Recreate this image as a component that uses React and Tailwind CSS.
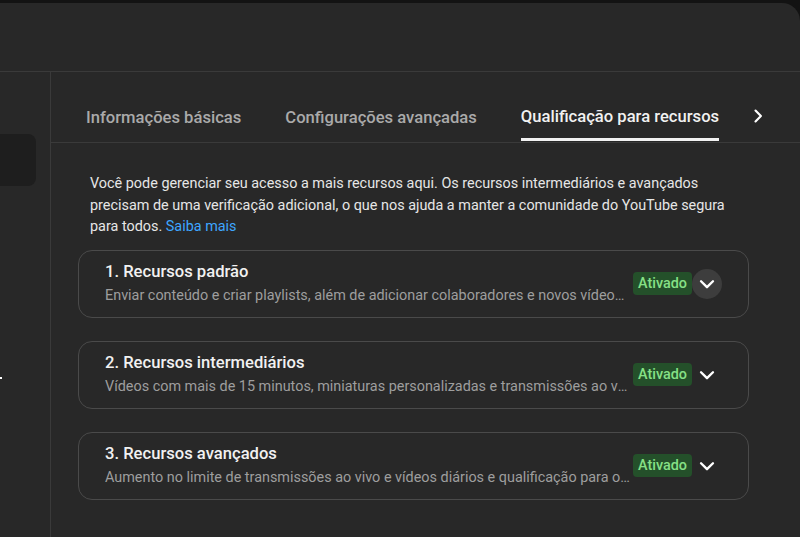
import React from 'react'

const recursos = [
  {
    titulo: '1. Recursos padrão',
    desc: 'Enviar conteúdo e criar playlists, além de adicionar colaboradores e novos vídeos a playlists',
    hover: true,
  },
  {
    titulo: '2. Recursos intermediários',
    desc: 'Vídeos com mais de 15 minutos, miniaturas personalizadas e transmissões ao vivo',
  },
  {
    titulo: '3. Recursos avançados',
    desc: 'Aumento no limite de transmissões ao vivo e vídeos diários e qualificação para o Programa de Parcerias',
  },
]

function Chevron({ className }) {
  return (
    <svg viewBox="0 0 24 24" className={className} fill="none" stroke="currentColor" strokeWidth="2.6" strokeLinecap="round" strokeLinejoin="round">
      <path d="M5.5 9l6.5 6.5L18.5 9" />
    </svg>
  )
}

export default function App() {
  return (
    <div className="w-[800px] h-[537px] overflow-hidden bg-[#131313] font-['Roboto','Noto_Sans',sans-serif]">
      <div className="mt-[3px] h-full rounded-tr-[18px] bg-[#282828] flex flex-col">
        {/* Header vide */}
        <div className="h-[69px] shrink-0 border-b border-[#3a3a3a]" />

        <div className="flex flex-1 min-h-0">
          {/* Barre latérale */}
          <div className="w-[51px] shrink-0 border-r border-[#3a3a3a] flex flex-col">
            <div className="mt-[62px] h-[52px] w-[36px] rounded-r-[8px] bg-[#1e1e1e]" />
            <div className="mt-[191px] h-[2px] w-[2px] bg-white" />
          </div>

          {/* Contenu */}
          <div className="flex-1 min-w-0 flex flex-col">
            <div className="h-[71px] shrink-0 border-b border-[#3a3a3a] flex items-end pl-[35px] pr-[32px]">
              <div className="flex items-end gap-[44px] text-[16.6px] font-medium leading-[20px] whitespace-nowrap">
                <div className="pb-[14px] text-[#aaaaaa]">Informações básicas</div>
                <div className="pb-[14px] text-[#aaaaaa]">Configurações avançadas</div>
                <div className="flex flex-col text-[#f1f1f1]">
                  <span className="pb-[11px]">Qualificação para recursos</span>
                  <span className="h-[3px] bg-[#f1f1f1] mb-[1px]" />
                </div>
              </div>
              <div className="ml-auto pb-[16px] text-white">
                <svg viewBox="0 0 24 24" className="w-[20px] h-[20px]" fill="none" stroke="currentColor" strokeWidth="2.6" strokeLinecap="round" strokeLinejoin="round">
                  <path d="M9 5.5l6.5 6.5L9 18.5" />
                </svg>
              </div>
            </div>

            <div className="pl-[27px] pr-[51px] pt-[30px]">
              <p className="pl-[12px] pr-[8px] text-[14.4px] leading-[21.5px] text-[#e6e6e6]">
                Você pode gerenciar seu acesso a mais recursos aqui. Os recursos intermediários e avançados precisam de uma verificação adicional, o que nos ajuda a manter a comunidade do YouTube segura para todos.{' '}
                <span className="text-[#3ea6ff]">Saiba mais</span>
              </p>

              <div className="mt-[12px] flex flex-col gap-[23px]">
                {recursos.map((r) => (
                  <div key={r.titulo} className="h-[68px] rounded-[14px] border border-[#4a4a4a] flex items-center pl-[26px] pr-[26px]">
                    <div className="flex-1 min-w-0">
                      <p className="text-[16.6px] font-medium leading-[22px] text-[#f1f1f1]">{r.titulo}</p>
                      <p className="mt-[3px] text-[14.4px] leading-[20px] text-[#9e9e9e] truncate">{r.desc}</p>
                    </div>
                    <span className="ml-[3px] shrink-0 h-[23px] px-[5px] rounded-[4px] bg-[#24502a] text-[#86e086] text-[14.4px] font-medium leading-[23px]">
                      Ativado
                    </span>
                    <div className={`shrink-0 w-[30px] h-[30px] rounded-full flex items-center justify-center text-white ${r.hover ? 'bg-[#3d3d3d]' : ''}`}>
                      <Chevron className="w-[22px] h-[22px]" />
                    </div>
                  </div>
                ))}
              </div>
            </div>
          </div>
        </div>
      </div>
    </div>
  )
}
